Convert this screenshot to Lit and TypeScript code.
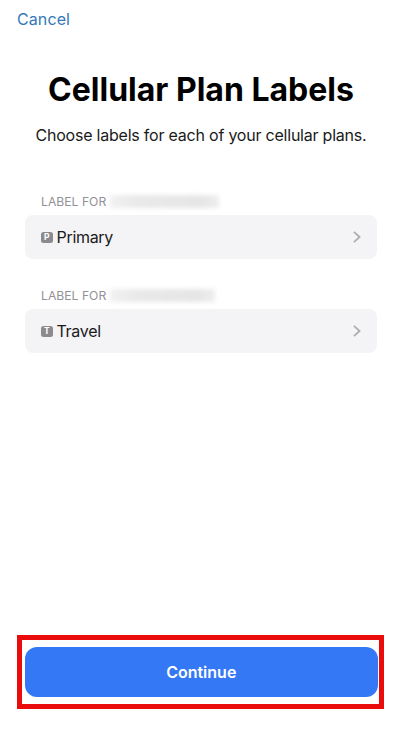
import { LitElement, html, css } from "lit";
import { customElement, property } from "lit/decorators.js";

@customElement("plan-row")
class PlanRow extends LitElement {
  @property() name = "";
  @property() badge = "";
  @property({ type: Number }) redaction = 110;

  static styles = css`
    :host { display: block; }
    .caption {
      display: flex;
      align-items: center;
      height: 16px;
      padding-left: 16px;
      font-size: 12.2px;
      letter-spacing: 0px;
      color: #929196;
    }
    .number {
      height: 13px;
      margin-left: 4px;
      background: linear-gradient(90deg, #f1f1f1, #e9e9e9 25%, #e7e7e7 60%, #e6e6e6 85%, #eeeeee);
      filter: blur(2.2px);
    }
    .row {
      display: flex;
      align-items: center;
      box-sizing: border-box;
      height: 44px;
      margin-top: 6px;
      padding: 0 16px;
      border-radius: 8px;
      background: #f4f3f6;
      color: #1a1a1c;
    }
    .badge {
      display: flex;
      align-items: center;
      justify-content: center;
      width: 11.5px;
      height: 11px;
      border-radius: 2.5px;
      background: #8c8a8f;
      color: #fff;
      font-size: 8.5px;
      font-weight: 700;
      line-height: 11px;
    }
    .name { flex: 1; margin-left: 4px; font-size: 16px; letter-spacing: -0.3px; }
    svg { display: block; }
  `;

  render() {
    return html`
      <div class="caption">
        LABEL FOR <span class="number" style="width:${this.redaction}px"></span>
      </div>
      <div class="row">
        <span class="badge">${this.badge}</span>
        <span class="name">${this.name}</span>
        <svg width="9" height="14" viewBox="0 0 9 14" fill="none" stroke="#aeadb1" stroke-width="1.8">
          <path d="M1.9 1.8 L7.6 7 L1.9 12.2" />
        </svg>
      </div>
    `;
  }
}

@customElement("app-root")
class AppRoot extends LitElement {
  static styles = css`
    :host {
      display: flex;
      flex-direction: column;
      box-sizing: border-box;
      height: 738px;
      padding: 8px 16px 29px 17px;
      background: #fff;
      font-family: Inter, "Liberation Sans", sans-serif;
    }
    .cancel {
      align-self: flex-start;
      font-size: 16px;
      letter-spacing: 0.1px;
      line-height: 22px;
      color: #3478b8;
    }
    h1 {
      margin: 40px 0 0 1px;
      font-size: 32px;
      line-height: 40px;
      font-weight: 700;
      text-align: center;
      white-space: nowrap;
      color: #000;
    }
    p {
      margin: 14px 0 0 1px;
      font-size: 16px;
      letter-spacing: -0.22px;
      line-height: 22px;
      text-align: center;
      white-space: nowrap;
      color: #1a1a1a;
    }
    .plans { display: flex; flex-direction: column; gap: 28px; margin: 47px 7px 0 8px; }
    .highlight {
      display: flex;
      box-sizing: border-box;
      height: 74px;
      margin-top: auto;
      padding: 7px 1.5px 7px 3px;
      border: 5px solid #ea0b0b;
    }
    button {
      flex: 1;
      border: 0;
      border-radius: 12px;
      background: #3478f6;
      color: #fff;
      font: 600 16px/50px Inter, "Liberation Sans", sans-serif;
      padding: 0;
    }
  `;

  render() {
    return html`
      <span class="cancel">Cancel</span>
      <h1>Cellular Plan Labels</h1>
      <p>Choose labels for each of your cellular plans.</p>
      <div class="plans">
        <plan-row name="Primary" badge="P" .redaction=${109}></plan-row>
        <plan-row name="Travel" badge="T" .redaction=${105}></plan-row>
      </div>
      <div class="highlight"><button>Continue</button></div>
    `;
  }
}
